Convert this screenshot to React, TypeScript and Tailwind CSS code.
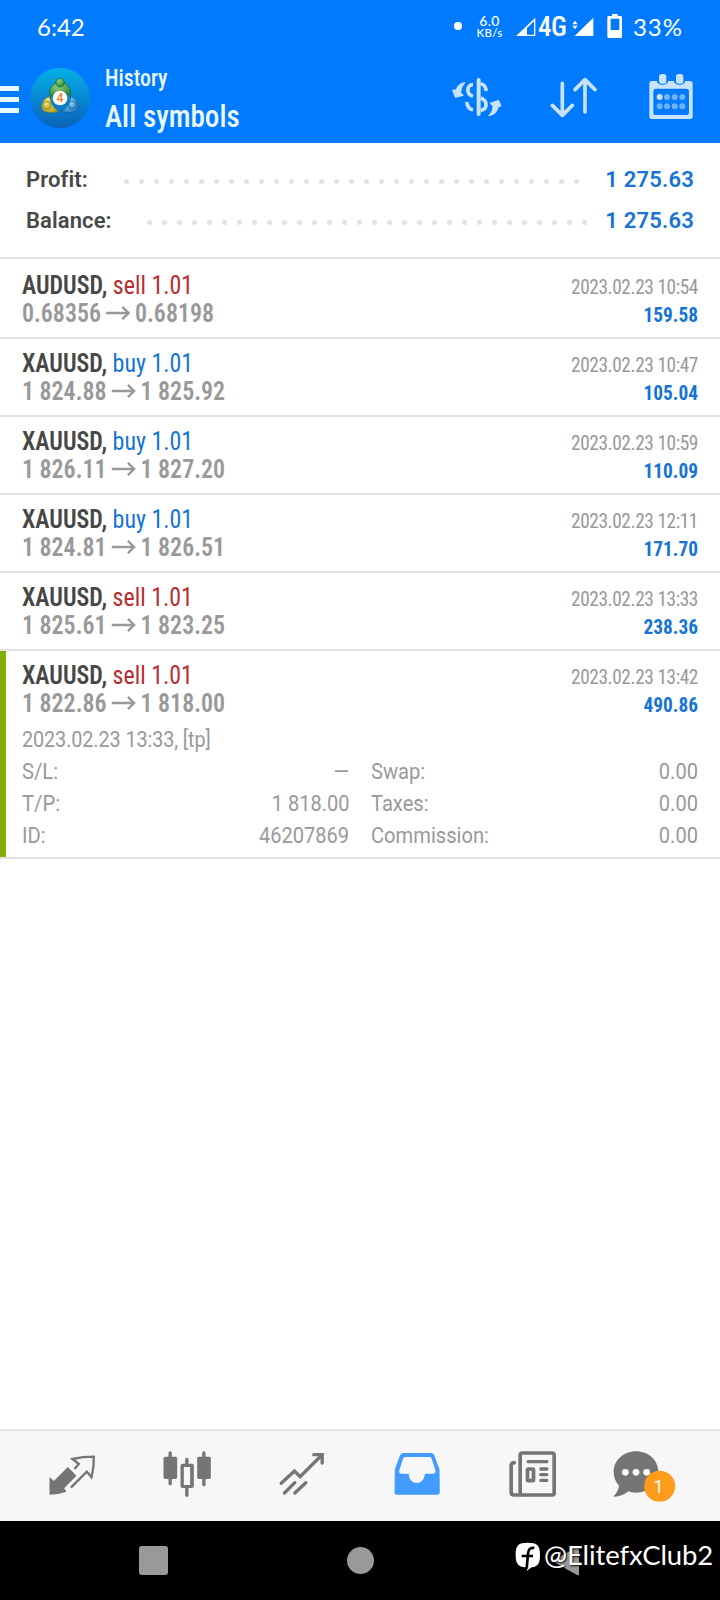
import type { ReactNode } from 'react'

type Deal = {
  symbol: string
  side: 'buy' | 'sell'
  open: string
  close: string
  time: string
  profit: string
}

const deals: Deal[] = [
  { symbol: 'AUDUSD', side: 'sell', open: '0.68356', close: '0.68198', time: '2023.02.23 10:54', profit: '159.58' },
  { symbol: 'XAUUSD', side: 'buy', open: '1 824.88', close: '1 825.92', time: '2023.02.23 10:47', profit: '105.04' },
  { symbol: 'XAUUSD', side: 'buy', open: '1 826.11', close: '1 827.20', time: '2023.02.23 10:59', profit: '110.09' },
  { symbol: 'XAUUSD', side: 'buy', open: '1 824.81', close: '1 826.51', time: '2023.02.23 12:11', profit: '171.70' },
  { symbol: 'XAUUSD', side: 'sell', open: '1 825.61', close: '1 823.25', time: '2023.02.23 13:33', profit: '238.36' },
  { symbol: 'XAUUSD', side: 'sell', open: '1 822.86', close: '1 818.00', time: '2023.02.23 13:42', profit: '490.86' },
]

const details = [
  ['S/L:', '—', 'Swap:', '0.00'],
  ['T/P:', '1 818.00', 'Taxes:', '0.00'],
  ['ID:', '46207869', 'Commission:', '0.00'],
]

function StatusBar() {
  return (
    <div className="flex h-[54px] items-start pl-[37px] font-['Lato',sans-serif] text-white">
      <span className="mt-[11px] w-[420px] text-[24px] leading-[32px]">6:42</span>
      <span className="-ml-[3px] mt-[22px] size-[8px] rounded-full bg-white" />
      <span className="ml-[14px] mt-[15px] flex w-[27px] flex-col items-center text-[14px] font-medium leading-[11px] tracking-[0.3px]">
        <span>6.0</span>
        <span className="mt-px text-[11.5px]">KB/s</span>
      </span>
      <svg className="ml-[13px] mt-[17px] h-[20px] w-[20px]" viewBox="258 51 60 60" fill="#fff">
        <path d="M258 108 L316 53 V108 Z M312 64 L291 84 V104 H312 Z" fillRule="evenodd" />
      </svg>
      <span className="ml-[2px] mt-[11px] w-[29px] font-['Roboto'] text-[27px] font-medium leading-[32px] tracking-[-0.5px] [font-stretch:75%]">4G</span>
      <svg className="ml-[5px] mt-[17px] h-[20px] w-[22px]" viewBox="428 51 66 60" fill="#fff">
        <path d="M436 108 L492 53 V108 Z M429 73 L437 62 L445 73 Z M429 77 L437 88 L445 77 Z" />
      </svg>
      <svg className="ml-[13px] mt-[14px] h-[25px] w-[16px]" viewBox="530 42 48 75">
        <path d="M545 42 h17 v6 h9 q4 0 4 4 v58 q0 4 -4 4 h-36 q-4 0 -4 -4 v-58 q0 -4 4 -4 h10 Z M541 56 V90 H567 V56 Z" fill="#fff" fillRule="evenodd" />
      </svg>
      <span className="ml-[10px] mt-[11px] text-[24px] leading-[32px] tracking-[0.9px]">33%</span>
    </div>
  )
}

function Logo() {
  return (
    <svg className="ml-[11px] mt-[14px] size-[60px]" viewBox="0 0 180 180">
      <defs>
        <linearGradient id="disc" x1="0" y1="0" x2="0" y2="1">
          <stop offset="0" stopColor="#04b0e6" />
          <stop offset="0.5" stopColor="#0888d2" />
          <stop offset="1" stopColor="#0a62b8" />
        </linearGradient>
        <radialGradient id="green" cx="0.4" cy="0.3" r="0.8">
          <stop offset="0" stopColor="#8fd07a" />
          <stop offset="1" stopColor="#1c7a34" />
        </radialGradient>
        <radialGradient id="gold" cx="0.4" cy="0.3" r="0.8">
          <stop offset="0" stopColor="#f4e878" />
          <stop offset="1" stopColor="#b39a1c" />
        </radialGradient>
        <radialGradient id="azure" cx="0.4" cy="0.3" r="0.8">
          <stop offset="0" stopColor="#8ed2f8" />
          <stop offset="1" stopColor="#1c78c4" />
        </radialGradient>
      </defs>
      <circle cx="90" cy="90" r="90" fill="url(#disc)" />
      <path d="M60 85 C42 90 31 108 37 124 C45 136 66 136 86 130 C70 120 60 104 60 85 Z" fill="url(#gold)" stroke="#6f7a2a" strokeWidth="2" />
      <path d="M122 85 C139 92 149 108 143 122 C137 135 112 137 94 130 C110 120 122 104 122 85 Z" fill="url(#azure)" stroke="#155a93" strokeWidth="2" />
      <path d="M60 90 C55 66 64 44 90 42 C116 44 126 66 121 90 C112 64 72 64 60 90 Z" fill="url(#green)" stroke="#1b6a3a" strokeWidth="2" />
      <circle cx="90" cy="44" r="13" fill="url(#green)" stroke="#1b6a3a" strokeWidth="2" />
      <circle cx="51" cy="112" r="12" fill="url(#gold)" stroke="#6f7a2a" strokeWidth="2" />
      <circle cx="127" cy="111" r="12" fill="url(#azure)" stroke="#155a93" strokeWidth="2" />
      <circle cx="90" cy="90" r="22" fill="#fbfaf7" />
      <text x="90" y="103" textAnchor="middle" fontFamily="Roboto" fontSize="37" fontWeight="500" fill="#ef8432">4</text>
    </svg>
  )
}

function Header() {
  return (
    <div className="flex h-[89px] text-[#eaf8ff]">
      <div className="mt-[32px] flex w-[19px] flex-col gap-[6px]">
        <span className="h-[5px] bg-current" />
        <span className="h-[5px] bg-current" />
        <span className="h-[5px] bg-current" />
      </div>
      <Logo />
      <div className="ml-[15px] flex w-[347px] origin-left scale-x-[0.91] flex-col font-medium [font-stretch:75%]">
        <span className="mt-[9px] text-[24px] leading-[30px]">History</span>
        <span className="text-[32px] leading-[46px]">All symbols</span>
      </div>
      <svg className="mt-[23px] h-[42px] w-[50px]" viewBox="67 231 150 126" fill="none" stroke="#c9e3ff" strokeWidth="11">
        <path d="M147 240 V342" strokeWidth="12" strokeLinecap="round" />
        <path d="M130 254 C111 254 108 282 130 289" />
        <path d="M152 252 C161 252 168 259 170 273" />
        <path d="M111 306 C113 320 120 328 130 330" />
        <path d="M153 294 C175 302 174 328 153 331" />
        <path d="M106 248 C92 248 82 259 80 270 L69 270 L77 292 L101 286 L93 278 C94 265 99 255 106 248 Z" fill="#c9e3ff" stroke="#c9e3ff" strokeWidth="3" strokeLinejoin="round" />
        <path d="M177 347 C194 345 204 334 205 321 L214 318 L207 301 L181 310 L190 318 C191 330 184 340 177 347 Z" fill="#c9e3ff" stroke="#c9e3ff" strokeWidth="3" strokeLinejoin="round" />
      </svg>
      <svg className="ml-[47px] mt-[23px] h-[42px] w-[50px]" viewBox="358 231 150 126" fill="none" stroke="#c9e3ff" strokeWidth="11" strokeLinecap="round" strokeLinejoin="round">
        <path d="M398 250 V346 M368 316 L398 346 L428 316" />
        <path d="M466 336 V240 M436 269 L466 239 L496 269" />
      </svg>
      <svg className="ml-[49px] mt-[19px] h-[47px] w-[46px]" viewBox="654 219 138 141" fill="#c9e3ff">
        <path d="M665 243 H681 C681 258 714 258 714 243 H732 C732 258 765 258 765 243 H781 Q788 243 788 250 V350 Q788 357 781 357 H665 Q658 357 658 350 V250 Q658 243 665 243 Z M678 266 Q670 266 670 274 V338 Q670 345 678 345 H769 Q777 345 777 338 V274 Q777 266 769 266 Z" fillRule="evenodd" />
        <rect x="687" y="222" width="22" height="29" rx="8" />
        <rect x="738" y="222" width="22" height="29" rx="8" />
        <circle cx="689" cy="291" r="9" />
        <g fill="#6fb2ff">
          <circle cx="711" cy="291" r="9" />
          <circle cx="734" cy="291" r="9" />
          <circle cx="757" cy="291" r="9" />
          <circle cx="689" cy="319" r="9" />
          <circle cx="711" cy="319" r="9" />
          <circle cx="734" cy="319" r="9" />
          <circle cx="757" cy="319" r="9" />
        </g>
      </svg>
    </div>
  )
}

function SummaryRow({ label, value, dots }: { label: string; value: string; dots: number }) {
  return (
    <div className="flex h-[41px] items-center pl-[26px] pr-[26px] text-[22px] font-semibold">
      <span className="tracking-[0.1px] text-[#474747]">{label}</span>
      <span className="mt-[4px] flex flex-1 justify-end gap-[10px]">
        {Array.from({ length: dots }, (_, i) => (
          <span key={i} className="size-[5px] rounded-full bg-[#e3e3e3]" />
        ))}
      </span>
      <span className={`text-right tracking-[0.2px] text-[#1574d6] ${dots === 31 ? 'w-[115px]' : 'w-[107px]'}`}>{value}</span>
    </div>
  )
}

function DealRow({ deal, first, children }: { deal: Deal; first?: boolean; children?: ReactNode }) {
  return (
    <div className={`relative border-b-2 border-[#e3e3e3] pl-[22px] pr-[22px] ${first ? 'pt-[12px]' : 'pt-[10px]'} ${children ? 'pb-[5px]' : 'pb-[10px]'}`}>
      {children && <span className="absolute inset-y-0 left-0 w-[6px] bg-[#7fb000]" />}
      <div className="flex h-[56px] justify-between [font-stretch:75%]">
        <div className="origin-left scale-x-[0.92] text-[26px] leading-[28px]">
          <div>
            <span className="font-semibold text-[#474747]">{deal.symbol},</span>{' '}
            <span className={deal.side === 'sell' ? 'text-[#b92d2d]' : 'text-[#1574d6]'}>{deal.side} 1.01</span>
          </div>
          <div className="flex font-semibold text-[#98999b]">
            <span>{deal.open}</span>
            <svg className="ml-[5px] mr-[5px] mt-[7px] h-[14px] w-[27px]" viewBox="0 0 27 14" fill="none" stroke="currentColor" strokeWidth="2.4">
              <path d="M0.5 7 H25.5 M18 0.8 L25 7 L18 13.2" />
            </svg>
            <span>{deal.close}</span>
          </div>
        </div>
        <div className="mt-[3px] origin-right scale-x-[0.92] text-right text-[21px] leading-[27px]">
          <div className="tracking-[-0.45px] text-[#98999b]">{deal.time}</div>
          <div className="mt-px font-bold text-[#1574d6]">{deal.profit}</div>
        </div>
      </div>
      {children}
    </div>
  )
}

function BottomNav() {
  return (
    <div className="flex h-[92px] border-t-2 border-[#e3e3e3] bg-[#f7f7f7] px-[14.5px] pt-[19px]">
      <div className="flex w-[115px] justify-center">
        <svg className="size-[50px]" viewBox="142.5 90 150 150">
          <path d="M150 171 L163 183 L205 141 L231 167 L194 205 L201 215 Q177 224 150 224 Z" fill="#757575" />
          <path d="M225 147 L238 132 L219 117 Q250 110 283 110 Q284 140 276 172 L262 155 L214 203" fill="none" stroke="#757575" strokeWidth="7" />
        </svg>
      </div>
      <div className="flex w-[115px] justify-center">
        <svg className="size-[50px]" viewBox="487.5 90 150 150" fill="#757575">
          <rect x="492" y="110" width="41" height="67" rx="5" />
          <rect x="507" y="94" width="10" height="102" rx="5" />
          <rect x="593" y="110" width="41" height="67" rx="5" />
          <rect x="608" y="94" width="10" height="105" rx="5" />
          <path d="M557 117 q5 -8 10 0 V131 H577 q6 0 6 6 V198 q0 6 -6 6 H567 V227 q-5 8 -10 0 V204 H549 q-6 0 -6 -6 V137 q0 -6 6 -6 H557 Z M553 141 V195 H572 V141 Z" fillRule="evenodd" />
        </svg>
      </div>
      <div className="flex w-[115px] justify-center">
        <svg className="size-[50px]" viewBox="832.5 90 150 150" fill="none" stroke="#757575" strokeWidth="10" strokeLinecap="round">
          <path d="M845 190 L885 153 L902 170 L967 105" />
          <path d="M943 104 H968 V129" />
          <path d="M855 219 L886 188 M886 219 L919 188" />
        </svg>
      </div>
      <div className="flex w-[115px] justify-center">
        <svg className="size-[50px]" viewBox="97.5 90 150 150">
          <path d="M132 99 H214 Q221 99 224 105 L240 148 L241 216 Q241 224 233 224 H113 Q105 224 105 216 L106 148 L122 105 Q125 99 132 99 Z M136 111 Q133 111 131 115 L119 152 Q118 161 127 161 H148 C149 198 194 198 196 161 H219 Q229 161 228 152 L216 115 Q214 111 210 111 Z" fill="#429cff" fillRule="evenodd" />
        </svg>
      </div>
      <div className="flex w-[115px] justify-center">
        <svg className="size-[50px]" viewBox="442.5 90 150 150" fill="none" stroke="#757575" strokeWidth="11" strokeLinecap="round">
          <rect x="482" y="99" width="102" height="126" rx="6" />
          <path d="M464 128 Q455 129 455 138 V217 Q455 225 464 225 H484" />
          <path d="M506 125 H562 M544 147 H562 M544 164 H562 M544 181 H562" strokeWidth="10" />
          <rect x="504" y="147" width="18" height="35" rx="2" />
        </svg>
      </div>
      <div className="flex w-[115px] justify-center">
        <svg className="h-[52px] w-[75px]" viewBox="750 90 225 156">
          <path d="M828 94 C867 94 895 121 895 156 C895 192 867 218 828 218 C820 218 813 217 806 214 C793 224 778 230 763 230 C761 230 761 228 763 226 C770 219 776 208 777 197 C767 187 761 172 761 156 C761 121 790 94 828 94 Z" fill="#757575" />
          <circle cx="796" cy="157" r="10" fill="#fff" />
          <circle cx="828" cy="157" r="10" fill="#fff" />
          <circle cx="860" cy="157" r="10" fill="#fff" />
          <circle cx="899" cy="199" r="46.5" fill="#ff9b1a" />
          <text x="896" y="218" textAnchor="middle" fontFamily="Roboto" fontSize="54" fill="#fff">1</text>
        </svg>
      </div>
    </div>
  )
}

function SystemNav() {
  return (
    <div className="relative flex h-[79px] bg-black">
      <span className="ml-[139px] mt-[25px] size-[29px] rounded-[3px] bg-[#999]" />
      <span className="ml-[179px] mt-[26px] size-[27px] rounded-full bg-[#999]" />
      <svg className="ml-[177px] mt-[25px] h-[31px] w-[28px]" viewBox="0 0 28 31">
        <path d="M1 15 L26 1 Q28 0 28 2 V28 Q28 30 26 29 L1 15 Z" fill="#999" />
      </svg>
      <div className="absolute left-[515px] top-[18px] flex items-center text-white">
        <svg className="mt-[3px] h-[29px] w-[25px]" viewBox="465 370 75 87">
          <path d="M503 372 C532 372 540 380 540 409 C540 434 534 444 515 446 L501 456 L502 446 C474 446 467 436 467 409 C467 380 475 372 503 372 Z" fill="#fff" />
          <path d="M523 388 C509 386 505 393 504 405 L500 450 M485 412 H519" fill="none" stroke="#000" strokeWidth="8" />
        </svg>
        <span className="ml-[4px] whitespace-nowrap font-['Lato',sans-serif] text-[27.5px] leading-[32px] tracking-[-0.1px] [text-shadow:1px_1px_2px_#000]">@ElitefxClub2</span>
      </div>
    </div>
  )
}

export default function App() {
  return (
    <div className="flex h-[1600px] w-[720px] flex-col overflow-hidden bg-white font-['Roboto',sans-serif]">
      <div className="h-[143px] bg-[#007aff]">
        <StatusBar />
        <Header />
      </div>
      <div className="h-[116px] border-b-2 border-[#e3e3e3] pt-[16px]">
        <SummaryRow label="Profit:" value="1 275.63" dots={31} />
        <SummaryRow label="Balance:" value="1 275.63" dots={30} />
      </div>
      <div className="flex-1">
        {deals.map((deal, i) => (
          <DealRow key={deal.time} deal={deal} first={i === 0}>
            {i === deals.length - 1 && (
              <div className="mt-[7px] text-[22px] leading-[32px] text-[#98999b]">
                <div className="origin-left scale-x-[0.9] tracking-[-0.1px]">2023.02.23 13:33, [tp]</div>
                {details.map(([label, value, label2, value2]) => (
                  <div key={label} className="flex">
                    <span className="origin-left scale-x-[0.92]">{label}</span>
                    <span className="ml-auto origin-right scale-x-[0.91]">{value}</span>
                    <span className="ml-[22px] flex w-[327px] justify-between">
                      <span className="origin-left scale-x-[0.915]">{label2}</span>
                      <span className="origin-right scale-x-[0.91]">{value2}</span>
                    </span>
                  </div>
                ))}
              </div>
            )}
          </DealRow>
        ))}
      </div>
      <BottomNav />
      <SystemNav />
    </div>
  )
}
